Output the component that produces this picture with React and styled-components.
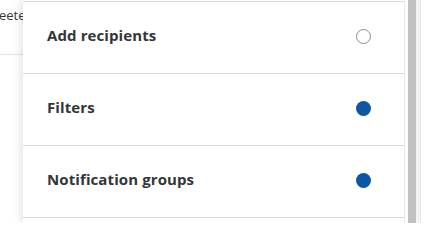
import React from "react";
import styled, { createGlobalStyle } from "styled-components";

const Global = createGlobalStyle`
  html, body { margin: 0; padding: 0; background: #ffffff; }
  body { font-family: "Open Sans", "Noto Sans", sans-serif; }
`;

const Stage = styled.div`
  position: relative;
  width: 425px;
  height: 223px;
  overflow: hidden;
  background: #ffffff;
`;

const Backdrop = styled.div`
  display: flex;
  flex-direction: column;
  width: 23px;
`;

const BackText = styled.div`
  font-family: "Open Sans", sans-serif;
  font-size: 13px;
  color: #32363a;
  line-height: 16px;
  padding-top: 7px;
  height: 47px;
  margin-left: -1px;
  white-space: nowrap;
  border-bottom: 1px solid #e4e4e4;
  box-sizing: border-box;
  height: 55px;
`;

const Panel = styled.div`
  position: absolute;
  top: 0;
  left: 23px;
  right: 0;
  bottom: 0;
  display: flex;
  box-shadow: -3px 0 7px rgba(0, 0, 0, 0.1);
  background: #ffffff;
`;

const List = styled.div`
  flex: 1;
  margin-top: 1px;
  border-top: 1px solid #dcdcdc;
  border-right: 1px solid #e8e8e8;
  display: flex;
  flex-direction: column;
`;

const Row = styled.div`
  height: 72px;
  flex: none;
  display: flex;
  align-items: center;
  justify-content: space-between;
  padding: 0 33px 6px 24px;
  box-sizing: border-box;
  border-bottom: 1px solid #d9d9d9;
`;

const Label = styled.span`
  font-family: "Open Sans", sans-serif;
  font-weight: 700;
  font-size: 15px;
  color: #32363a;
  letter-spacing: 0.1px;
`;

const Dot = styled.span`
  width: 15px;
  height: 15px;
  border-radius: 50%;
  box-sizing: border-box;
  margin-top: 4px;
  background: ${(p) => (p.$on ? "#0b57a6" : "#ffffff")};
  border: ${(p) => (p.$on ? "none" : "1px solid #8c8c8c")};
`;

const Scroll = styled.div`
  width: 17px;
  flex: none;
  display: flex;
  padding-left: 3px;
  background: #ffffff;
`;

const Thumb = styled.div`
  width: 8px;
  background: #c1c1c1;
`;

const Track = styled.div`
  width: 4px;
  background: #f1f1f1;
  border-right: 1px solid #e6e6e6;
`;

const rows = [
  { label: "Add recipients", on: false },
  { label: "Filters", on: true },
  { label: "Notification groups", on: true },
];

export default function App() {
  return (
    <>
      <Global />
      <Stage>
        <Backdrop>
          <BackText>eete</BackText>
        </Backdrop>
        <Panel>
          <List>
            {rows.map((r) => (
              <Row key={r.label}>
                <Label>{r.label}</Label>
                <Dot $on={r.on} />
              </Row>
            ))}
          </List>
          <Scroll>
            <Thumb />
            <Track />
          </Scroll>
        </Panel>
      </Stage>
    </>
  );
}
